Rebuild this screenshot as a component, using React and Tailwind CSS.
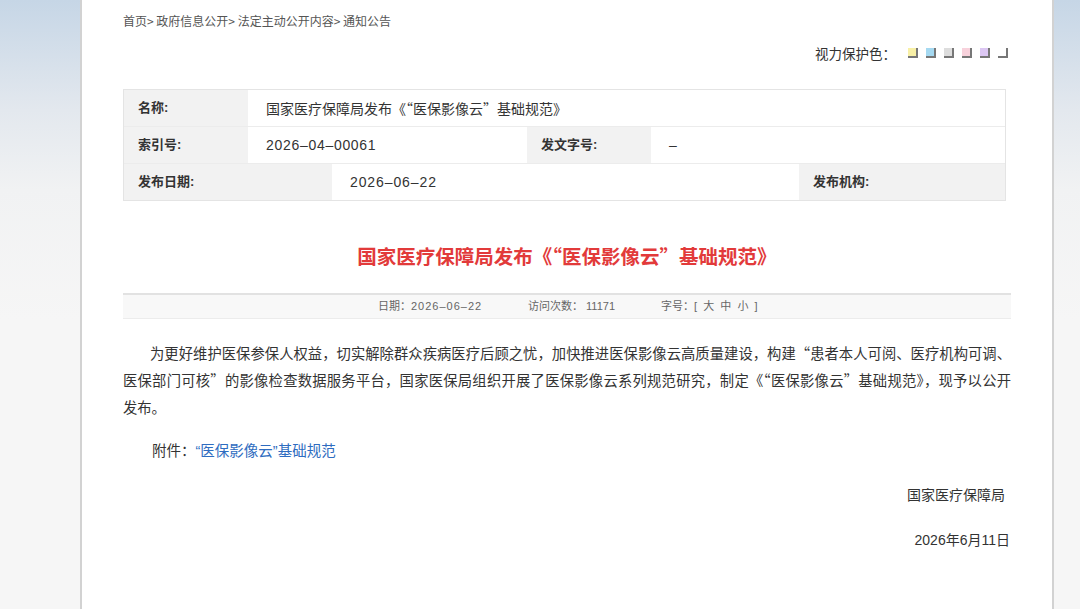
import React from 'react';

const font = { fontFamily: '"Liberation Sans", "Noto Sans CJK SC", sans-serif' };
const cjk = { fontFamily: '"Noto Sans CJK SC", "Noto Sans", sans-serif' };

const swatches = ['#f8f0a6', '#a5d9f1', '#dddddd', '#f8d2dc', '#dcc7f3', '#ffffff'];

const bodyLines = [
  '为更好维护医保参保人权益，切实解除群众疾病医疗后顾之忧，加快推进医保影像云高质量建设，构建“患者本人可阅、医疗机构可调、',
  '医保部门可核”的影像检查数据服务平台，国家医保局组织开展了医保影像云系列规范研究，制定《“医保影像云”基础规范》，现予以公开',
];

const Label = ({ children, className = '' }) => (
  <div className={`bg-[#f2f2f2] flex items-center pl-[14px] text-[13px] font-bold text-[#333] ${className}`}>{children}</div>
);

const Value = ({ children, className = '' }) => (
  <div className={`bg-white flex items-center pl-[18px] text-[14px] text-[#333] ${className}`}>{children}</div>
);

export default function App() {
  return (
    <div
      className="min-h-[609px] w-[1080px] overflow-hidden bg-[linear-gradient(180deg,#c6d6e6_0px,#e3e8ee_110px,#f1f2f3_190px,#f6f6f6_320px)]"
      style={font}
    >
      <div className="ml-[80px] w-[974px] min-h-[609px] bg-white border-x-2 border-[#d2d2d2] px-[41px] text-[#333]">
        {/* breadcrumb */}
        <div className="pt-[12px] text-[12px] leading-[18px] text-[#555]" style={cjk}>
          首页&gt; 政府信息公开&gt; 法定主动公开内容&gt; 通知公告
        </div>

        {/* eye-care colours */}
        <div className="mt-[14px] flex items-center justify-end pr-[1px] text-[13.5px] leading-[18px] text-[#333]" style={cjk}>
          <span>视力保护色：</span>
          <div className="ml-[12px] mr-[2px] flex gap-[8px]">
            {swatches.map((c, i) => (
              <span
                key={i}
                className="block w-[10px] h-[10px] border-r-2 border-b-2 border-[#777]"
                style={{ backgroundColor: c }}
              />
            ))}
          </div>
        </div>

        {/* info table */}
        <div className="mt-[27px] w-[883px] border border-[#e4e4e4] grid grid-rows-[37px_37px_36px]">
          <div className="flex border-b border-[#ececec]">
            <Label className="w-[124px]">名称:</Label>
            <Value className="flex-1"><span style={cjk}>国家医疗保障局发布《“医保影像云”基础规范》</span></Value>
          </div>
          <div className="flex border-b border-[#ececec]">
            <Label className="w-[124px]">索引号:</Label>
            <Value className="w-[279px]"><span className="tracking-[0.7px]">2026–04–00061</span></Value>
            <Label className="w-[124px]">发文字号:</Label>
            <Value className="flex-1">–</Value>
          </div>
          <div className="flex">
            <Label className="w-[208px]">发布日期:</Label>
            <Value className="w-[467px]"><span className="tracking-[0.9px]">2026–06–22</span></Value>
            <Label className="flex-1">发布机构:</Label>
          </div>
        </div>

        {/* title */}
        <h1 className="mt-[42px] text-center text-[19.5px] leading-[26px] font-bold text-[#e23a3a]" style={cjk}>
          国家医疗保障局发布《“医保影像云”基础规范》
        </h1>

        {/* meta bar */}
        <div className="mt-[24px] h-[26px] bg-[#f8f8f8] border-t-2 border-[#e2e2e2] border-b border-b-[#ececec] flex items-center text-[11px] text-[#666]">
          <div className="ml-[255px] flex">
            <span className="w-[150px]">日期：<span className="tracking-[1px]">2026–06–22</span></span>
            <span className="w-[133px]">访问次数：&nbsp;11171</span>
            <span>字号：[&nbsp;&nbsp;大&nbsp;&nbsp;中&nbsp;&nbsp;小&nbsp;&nbsp;]</span>
          </div>
        </div>

        {/* body */}
        <div className="mt-[20px] text-[14.3px] leading-[27px] text-[#333]" style={cjk}>
          {bodyLines.map((line, i) => (
            <div key={i} className={`text-justify [text-align-last:justify] ${i === 0 ? 'pl-[27px]' : ''}`}>
              {line}
            </div>
          ))}
          <div>发布。</div>
        </div>

        <p className="mt-[18px] text-[14.5px] leading-[27px] indent-[2em] text-[#333]">
          附件：<span className="text-[#2e6cc0]">“医保影像云”基础规范</span>
        </p>

        <div className="mt-[20px] flex flex-col items-end text-[14px] leading-[20px] text-[#333]">
          <span className="mr-[6px]">国家医疗保障局</span>
          <span className="mt-[25px] mr-[1px]">2026年6月11日</span>
        </div>
      </div>
    </div>
  );
}
